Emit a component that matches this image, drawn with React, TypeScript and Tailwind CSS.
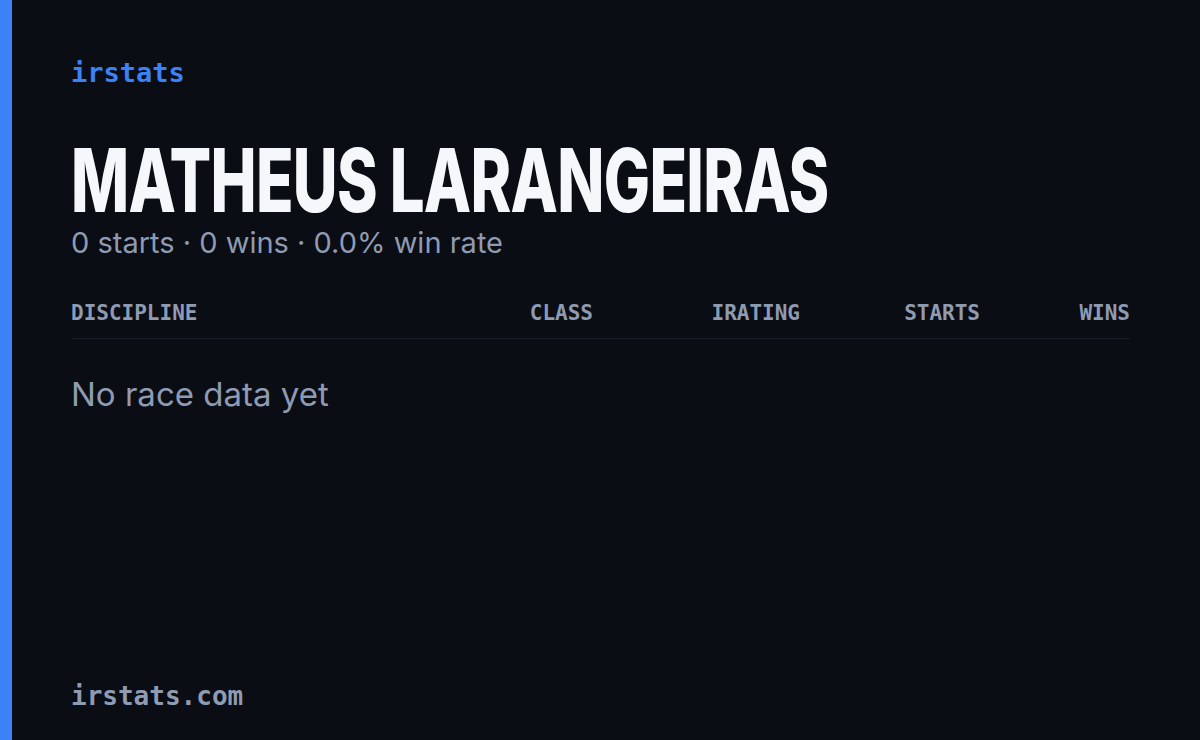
export default function App() {
  const mono = { fontFamily: '"DejaVu Sans Mono", "Liberation Mono", monospace' };
  const sans = { fontFamily: 'Inter, "Noto Sans", sans-serif' };
  return (
    <div className="flex h-[740px] w-[1200px] overflow-hidden bg-[#0a0d14]">
      <div className="w-[12px] shrink-0 bg-[#3b82f6]" />
      <div className="flex min-w-0 flex-1 flex-col pl-[59px] pr-[70px] pt-[56px] pb-[28px]">
        <div className="text-[27px] leading-[34px] font-semibold text-[#3b82f6]" style={mono}>
          irstats
        </div>
        <div className="mt-[52px] h-[76px] w-full overflow-visible">
          <div
            className="w-[1000px] origin-left scale-x-[0.70] whitespace-nowrap text-[88px] leading-[76px] font-extrabold tracking-[-1px] text-[#f5f7fa]"
            style={sans}
          >
            MATHEUS LARANGEIRAS
          </div>
        </div>
        <div className="mt-[7px] text-[29px] leading-[36px] text-[#8e9bb2]" style={sans}>
          0 starts · 0 wins · 0.0% win rate
        </div>
        <div
          className="mt-[39px] grid grid-cols-[1fr_139px_207px_180px_150px] border-b border-[#1a1e29] pb-[12px] text-[21px] leading-[26px] font-semibold text-[#8e9bb2]"
          style={mono}
        >
          <div>DISCIPLINE</div>
          <div className="text-right">CLASS</div>
          <div className="text-right">IRATING</div>
          <div className="text-right">STARTS</div>
          <div className="text-right">WINS</div>
        </div>
        <div className="mt-[35px] text-[33px] leading-[40px] text-[#8e9bb2]" style={sans}>
          No race data yet
        </div>
        <div className="mt-auto text-[26px] leading-[32px] font-semibold text-[#8e9bb2]" style={mono}>
          irstats.com
        </div>
      </div>
    </div>
  );
}
